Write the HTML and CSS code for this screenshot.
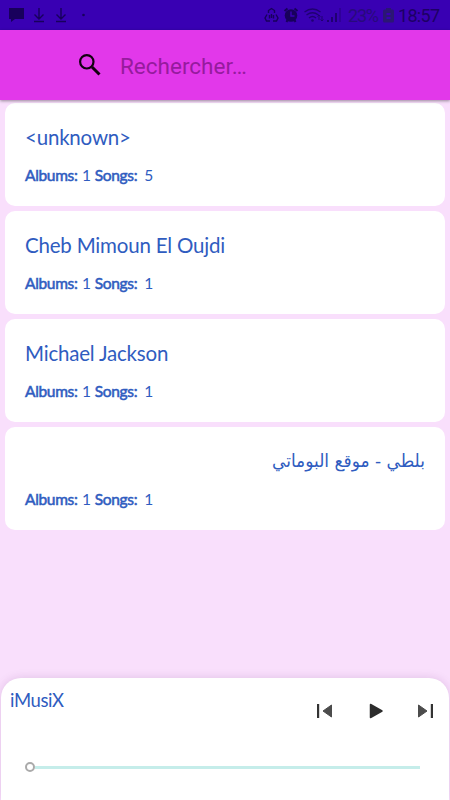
FILE: index.html
```html
<!DOCTYPE html>
<html lang="fr">
<head>
<meta charset="utf-8">
<title>iMusiX</title>
<link rel="stylesheet" href="styles.css">
</head>
<body>
<div class="app">
  <header class="status">
    <svg class="status-left" width="90" height="30" viewBox="0 0 90 30">
      <path class="fill" d="M9 8h15v11H15l-4 3v-3H9z"/>
      <path class="line" d="M39 8v11M34.500 14.500l4.500 4.500 4.500-4.500M34 21.500h10M61 8v11M56.500 14.500l4.500 4.500 4.500-4.500M56 21.500h10"/>
      <circle class="fill" cx="83.500" cy="15" r="1.300"/>
    </svg>
    <div class="status-right">
      <svg width="82" height="30" viewBox="0 0 82 30">
        <path class="line" d="M5.500 13V10.500l3-2 3 2V13M4 14.500l-2 3.500 1.500 3H7M13 14.500l2 3.500-1.500 3H10M6.500 15v3.500M8.500 14v4M10.500 15v3.500"/>
        <circle class="fill" cx="28" cy="15.500" r="6.300"/>
        <path class="line heavy" d="M21.500 11l3-2.500M34.500 11l-3-2.500M23.500 22l1-2M32.500 22l-1-2"/>
        <path class="clock" d="M28 11.500v4.500h3.500"/>
        <g class="dim">
          <path class="line" d="M41.500 12q8-6 16 0M43.500 15q6-4.500 12 0M46 18q3.500-3 7 0"/>
          <circle class="fill" cx="49.500" cy="20.500" r="1.300"/>
          <path class="line thin" d="M56 20V15m-1.500 1.500L56 15l1.500 1.500M59 16v5m-1.500-1.500L59 21l1.500-1.500"/>
          <path class="fill" d="M64 20h2v2h-2zM68 17h2v5h-2zM72 13h2v9h-2z"/>
          <path class="fill faint" d="M76 8h2v14h-2z"/>
        </g>
      </svg>
      <span class="percent">23%</span>
      <svg class="battery" width="11" height="30" viewBox="0 0 11 30">
        <path d="M3 8h5v1.500h1.500q1.500 0 1.500 1.500v10q0 1.500-1.500 1.500h-8Q0 22.500 0 21V11q0-1.500 1.500-1.500H3z"/>
        <path class="level" d="M3.500 13h4v2h-4zM3.500 17h4v2h-4z"/>
      </svg>
      <span class="time">18:57</span>
    </div>
  </header>
  <div class="search">
    <svg width="22" height="22" viewBox="0 0 22 22">
      <circle cx="7.800" cy="7.800" r="6.700"/>
      <path class="handle" d="M13 13l7.500 7.500"/>
    </svg>
    <span class="hint">Rechercher…</span>
  </div>
  <main class="list">
    <article class="card">
      <h2 class="name">&lt;unknown&gt;</h2>
      <p class="meta"><b>Albums:</b><span>1</span><b>Songs:</b><span class="songs">5</span></p>
    </article>
    <article class="card">
      <h2 class="name">Cheb Mimoun El Oujdi</h2>
      <p class="meta"><b>Albums:</b><span>1</span><b>Songs:</b><span class="songs">1</span></p>
    </article>
    <article class="card">
      <h2 class="name">Michael Jackson</h2>
      <p class="meta"><b>Albums:</b><span>1</span><b>Songs:</b><span class="songs">1</span></p>
    </article>
    <article class="card">
      <h2 class="name arabic" dir="rtl" lang="ar">بلطي - موقع البوماتي</h2>
      <p class="meta"><b>Albums:</b><span>1</span><b>Songs:</b><span class="songs">1</span></p>
    </article>
  </main>
  <footer class="player">
    <div class="player-top">
      <span class="track">iMusiX</span>
      <div class="controls">
        <svg width="16" height="16" viewBox="0 0 16 16"><path class="bar" d="M0 1h2.200v14H0z"/><path class="skip" d="M14.500 2v12L6 8z"/></svg>
        <svg width="16" height="16" viewBox="0 0 16 16"><path class="play" d="M3.500 1.500v13L15 8z"/></svg>
        <svg width="16" height="16" viewBox="0 0 16 16"><path class="skip" d="M1.500 2v12L10 8z"/><path class="bar" d="M13.800 1H16v14h-2.200z"/></svg>
      </div>
    </div>
    <div class="seek"><span class="thumb"></span><span class="rail"></span></div>
  </footer>
</div>
</body>
</html>
```

FILE: styles.css
```css
* { box-sizing: border-box; }
body { margin: 0; font-family: Lato, "DejaVu Sans", sans-serif; color: #2f5cc0; }
svg { display: block; flex: none; }
.app { display: flex; flex-direction: column; width: 450px; height: 800px; background: #f9dffc; overflow: hidden; }

.status { display: flex; justify-content: space-between; height: 30px; flex: none; background: #3900b3; color: #1d0065; }
.status .fill { fill: #18005c; }
.status .line { fill: none; stroke: #18005c; stroke-width: 1.4; }
.status .heavy { stroke-width: 2; }
.status .thin { stroke-width: 1; }
.status .clock { fill: none; stroke: #3900b3; stroke-width: 1.4; }
.dim { opacity: .75; }
.faint { opacity: .4; }
.status-right { display: flex; width: 187px; font: 18px/31px Roboto, sans-serif; }
.percent { width: 31px; margin-left: 3px; color: #280a7c; letter-spacing: -1.2px; white-space: nowrap; }
.battery { margin-left: 4px; fill: #2b1674; }
.battery .level { fill: #3900b3; }
.time { margin-left: 4px; letter-spacing: -.7px; }

.search { display: flex; align-items: center; height: 70px; flex: none; padding: 0 0 0 79px; background: #e238ea; box-shadow: 0 1px 3px rgba(0, 0, 0, .4); z-index: 1; }
.search svg { fill: none; stroke: #12000f; stroke-width: 2.2; }
.search .handle { stroke-width: 3; }
.hint { margin: 1px 0 0 19px; font: 22.5px/28px Roboto, sans-serif; color: #961b9e; }

.list { display: flex; flex-direction: column; gap: 5px; flex: 1; padding: 3px 5px 0; }
.card { height: 103px; padding: 19px 20px 0; border-radius: 10px; background: #fff; }
.name { margin: 0; height: 30px; font-size: 20.5px; letter-spacing: -.2px; line-height: 30px; font-weight: 400; white-space: nowrap; }
.arabic { font-family: "DejaVu Sans", sans-serif; font-size: 18px; line-height: 30px; letter-spacing: 0; transform: scaleX(.945); transform-origin: right; }
.meta { display: flex; gap: 4.5px; margin: 13px 0 0; font-size: 15.5px; line-height: 20px; letter-spacing: -.3px; }
.meta b { font-weight: 400; letter-spacing: -.32px; -webkit-text-stroke: .55px #2f5cc0; }
.meta b + span { margin-right: -.5px; }
.meta .songs { margin-left: 2.5px; }

.player { height: 122px; flex: none; border-radius: 20px 20px 0 0; margin: 0 1px; background: #fff; box-shadow: 0 0 10px rgba(90, 20, 100, .15); }
.player-top { display: flex; justify-content: space-between; height: 66px; padding: 9px 16px 0 9px; }
.track { font-size: 18.5px; line-height: 26px; letter-spacing: -.4px; }
.controls { display: flex; justify-content: space-between; width: 116px; margin-top: 16px; }
.bar { fill: #333; }
.skip { fill: #4c4c4c; stroke: #4c4c4c; stroke-linejoin: round; }
.play { fill: #2c2c2c; stroke: #2c2c2c; stroke-width: 1.5; stroke-linejoin: round; }
.seek { display: flex; align-items: center; height: 46px; padding: 0 29px 0 24px; }
.thumb { width: 10px; height: 10px; border: 2px solid #aaa; border-radius: 50%; }
.rail { flex: 1; height: 3px; background: #c5edea; }
```
